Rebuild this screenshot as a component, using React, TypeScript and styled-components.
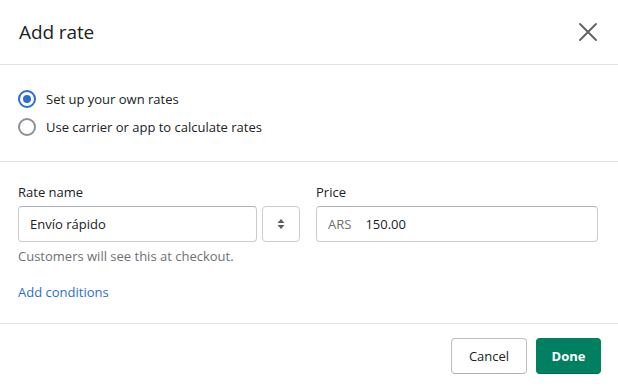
import React from "react";
import styled, { createGlobalStyle } from "styled-components";

const Global = createGlobalStyle`
  html, body { margin: 0; padding: 0; background: #fff; }
  body { font-family: "Open Sans", "Noto Sans", sans-serif; color: #202223; }
  * { box-sizing: border-box; }
`;

const Modal = styled.div`
  width: 618px;
  height: 390px;
  background: #fff;
  display: flex;
  flex-direction: column;
`;

const Header = styled.div`
  height: 65px;
  display: flex;
  align-items: center;
  justify-content: space-between;
  padding: 0 18px 0 19px;
  border-bottom: 1px solid #e1e3e5;
`;

const Title = styled.h2`
  margin: 0;
  font-size: 19px;
  font-weight: 400;
  letter-spacing: -0.1px;
`;

const CloseButton = styled.button`
  width: 24px;
  height: 24px;
  border: 0;
  background: none;
  padding: 0;
  display: flex;
  align-items: center;
  justify-content: center;
  cursor: pointer;
`;

const Section = styled.div<{ $pt: number; $pb: number }>`
  padding: ${(p) => p.$pt}px 18px ${(p) => p.$pb}px;
  border-bottom: 1px solid #e1e3e5;
`;

const RadioList = styled.div`
  display: flex;
  flex-direction: column;
  gap: 8px;
`;

const RadioRow = styled.label`
  display: flex;
  align-items: center;
  gap: 10px;
  font-size: 13px;
  height: 20px;
`;

const RadioDot = styled.span<{ $on?: boolean }>`
  width: 18px;
  height: 18px;
  border-radius: 50%;
  border: 2px solid ${(p) => (p.$on ? "#2c6ecb" : "#8c9196")};
  display: flex;
  align-items: center;
  justify-content: center;
  &::after {
    content: "";
    width: 8px;
    height: 8px;
    border-radius: 50%;
    background: ${(p) => (p.$on ? "#2c6ecb" : "transparent")};
  }
`;

const FieldsRow = styled.div`
  display: flex;
  align-items: flex-start;
  gap: 16px;
`;

const Field = styled.div<{ $w: number }>`
  width: ${(p) => p.$w}px;
  display: flex;
  flex-direction: column;
`;

const Label = styled.div`
  font-size: 13px;
  height: 20px;
  line-height: 20px;
  margin-bottom: 4px;
`;

const InputGroup = styled.div`
  display: flex;
  gap: 5px;
`;

const TextBox = styled.div<{ $w?: number }>`
  height: 36px;
  flex: none;
  width: ${(p) => (p.$w ? `${p.$w}px` : "100%")};
  border: 1px solid #c9cccf;
  border-top-color: #aeb4b9;
  border-radius: 4px;
  display: flex;
  align-items: center;
  padding: 0 11px;
  font-size: 13px;
  gap: 14px;
`;

const Prefix = styled.span`
  color: #6d7175;
`;

const Stepper = styled.div`
  width: 38px;
  height: 36px;
  border: 1px solid #c9cccf;
  border-radius: 4px;
  display: flex;
  align-items: center;
  justify-content: center;
`;

const Help = styled.div`
  font-size: 13px;
  color: #6d7175;
  margin-top: 4px;
  height: 20px;
  line-height: 20px;
`;

const Link = styled.a`
  display: block;
  margin-top: 16px;
  font-size: 13px;
  color: #2c6ecb;
  height: 20px;
  line-height: 20px;
  text-decoration: none;
`;

const Footer = styled.div`
  flex: 1;
  display: flex;
  justify-content: flex-end;
  align-items: flex-start;
  padding: 14px 17px 0;
  gap: 9px;
`;

const Button = styled.button<{ $primary?: boolean }>`
  height: 36px;
  padding: 0 ${(p) => (p.$primary ? "14.5px" : "17px")};
  border-radius: 4px;
  font-family: inherit;
  font-size: 13px;
  font-weight: ${(p) => (p.$primary ? 700 : 400)};
  color: ${(p) => (p.$primary ? "#fff" : "#202223")};
  background: ${(p) => (p.$primary ? "#008060" : "#fff")};
  border: 1px solid ${(p) => (p.$primary ? "#008060" : "#babfc3")};
  border-bottom-color: ${(p) => (p.$primary ? "#006e52" : "#aeb4b9")};
  cursor: pointer;
`;

export default function App() {
  return (
    <>
      <Global />
      <Modal>
        <Header>
          <Title>Add rate</Title>
          <CloseButton aria-label="Close">
            <svg width="20" height="20" viewBox="0 0 20 20">
              <path d="M2 2 L18 18 M18 2 L2 18" stroke="#5c5f62" strokeWidth="1.8" strokeLinecap="round" />
            </svg>
          </CloseButton>
        </Header>
        <Section $pt={24} $pb={24}>
          <RadioList>
            <RadioRow>
              <RadioDot $on />
              Set up your own rates
            </RadioRow>
            <RadioRow>
              <RadioDot />
              Use carrier or app to calculate rates
            </RadioRow>
          </RadioList>
        </Section>
        <Section $pt={20} $pb={21}>
          <FieldsRow>
            <Field $w={282}>
              <Label>Rate name</Label>
              <InputGroup>
                <TextBox $w={239}>Envío rápido</TextBox>
                <Stepper>
                  <svg width="10" height="14" viewBox="0 0 10 14">
                    <path d="M5 2 L8.5 6 L1.5 6 Z M5 12 L1.5 8 L8.5 8 Z" fill="#5c5f62" />
                  </svg>
                </Stepper>
              </InputGroup>
              <Help>Customers will see this at checkout.</Help>
              <Link href="#">Add conditions</Link>
            </Field>
            <Field $w={282}>
              <Label>Price</Label>
              <TextBox>
                <Prefix>ARS</Prefix>
                150.00
              </TextBox>
            </Field>
          </FieldsRow>
        </Section>
        <Footer>
          <Button>Cancel</Button>
          <Button $primary>Done</Button>
        </Footer>
      </Modal>
    </>
  );
}
